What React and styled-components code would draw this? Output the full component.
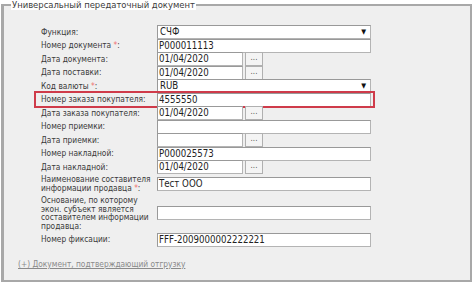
import styled, { createGlobalStyle } from "styled-components";

const Global = createGlobalStyle`
  body {
    margin: 0;
    background: #ffffff;
    font-family: "DejaVu Sans Condensed", "DejaVu Sans", sans-serif;
  }
`;

const Fieldset = styled.fieldset`
  margin: 0 0 0 1px;
  width: 471px;
  height: 282px;
  box-sizing: border-box;
  padding: 15px 0 0 32px;
  border: 2px solid #a8a8a8;
  border-left-width: 3px;
  background: #efefef;
  display: flex;
  flex-direction: column;
`;

const Legend = styled.legend`
  margin-left: -25px;
  padding: 0 1px;
  font-size: 9.4px;
  color: #3c3c3c;
  line-height: 10px;
  background: #ffffff;
`;

const Form = styled.div`
  display: flex;
  flex-direction: column;
  width: 337px;
`;

const Row = styled.div`
  display: grid;
  grid-template-columns: 116px 214px;
  align-items: center;
  padding-left: 5px;
  height: ${(p) => p.$h || 13.5}px;
  outline: ${(p) => (p.$marked ? "2px solid #cf3b4a" : "none")};
  outline-offset: 0;
`;

const Label = styled.div`
  font-size: 8.3px;
  color: #3a3a3a;
  line-height: 8.5px;
  white-space: nowrap;
`;

const Star = styled.span`
  color: #f07070;
`;

const Field = styled.div`
  display: flex;
  gap: 2px;
  align-items: center;
`;

const Input = styled.div`
  box-sizing: border-box;
  width: ${(p) => p.$w || 214}px;
  height: 14px;
  background: #ffffff;
  border: 1px solid #b4b4b4;
  border-top-color: #999;
  border-left-color: #999;
  font-size: 9.6px;
  line-height: 12px;
  padding-left: 1px;
  color: #222;
  white-space: nowrap;
  overflow: hidden;
`;

const Select = styled(Input)`
  display: flex;
  justify-content: space-between;
  padding: 0 4px 0 2px;
`;

const Arrow = styled.span`
  font-size: 7px;
  color: #111;
`;

const Dots = styled.div`
  box-sizing: border-box;
  width: 18px;
  height: 14px;
  border: 1px solid #b0b0b0;
  background: #f4f4f4;
  font-size: 8px;
  line-height: 10px;
  text-align: center;
  color: #555;
`;

const Link = styled.a`
  margin: 13px 0 0 -18px;
  font-size: 8.3px;
  line-height: 11px;
  color: #8a8a8a;
  text-decoration: underline;
  cursor: pointer;
`;

const DateField = ({ value }) => (
  <Field>
    <Input $w={86}>{value}</Input>
    <Dots>...</Dots>
  </Field>
);

export default function App() {
  return (
    <>
      <Global />
      <Fieldset>
        <Legend>Универсальный передаточный документ</Legend>
        <Form>
          <Row>
            <Label>Функция:</Label>
            <Select>СЧФ<Arrow>▼</Arrow></Select>
          </Row>
          <Row>
            <Label>Номер документа <Star>*</Star>:</Label>
            <Input>P000011113</Input>
          </Row>
          <Row>
            <Label>Дата документа:</Label>
            <DateField value="01/04/2020" />
          </Row>
          <Row>
            <Label>Дата поставки:</Label>
            <DateField value="01/04/2020" />
          </Row>
          <Row>
            <Label>Код валюты <Star>*</Star>:</Label>
            <Select>RUB<Arrow>▼</Arrow></Select>
          </Row>
          <Row $marked>
            <Label>Номер заказа покупателя:</Label>
            <Input>4555550</Input>
          </Row>
          <Row>
            <Label>Дата заказа покупателя:</Label>
            <DateField value="01/04/2020" />
          </Row>
          <Row>
            <Label>Номер приемки:</Label>
            <Input />
          </Row>
          <Row>
            <Label>Дата приемки:</Label>
            <DateField value="" />
          </Row>
          <Row>
            <Label>Номер накладной:</Label>
            <Input>P000025573</Input>
          </Row>
          <Row>
            <Label>Дата накладной:</Label>
            <DateField value="01/04/2020" />
          </Row>
          <Row $h={20}>
            <Label>
              Наименование составителя
              <br />
              информации продавца <Star>*</Star>:
            </Label>
            <Input>Тест ООО</Input>
          </Row>
          <Row $h={39}>
            <Label>
              Основание, по которому
              <br />
              экон. субъект является
              <br />
              составителем информации
              <br />
              продавца:
            </Label>
            <Input />
          </Row>
          <Row>
            <Label>Номер фиксации:</Label>
            <Input>FFF-2009000002222221</Input>
          </Row>
        </Form>
        <Link>(+) Документ, подтверждающий отгрузку</Link>
      </Fieldset>
    </>
  );
}
